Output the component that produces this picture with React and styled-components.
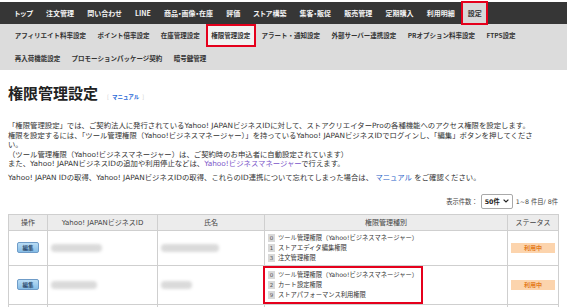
import React from "react";
import styled, { createGlobalStyle } from "styled-components";

const GlobalStyle = createGlobalStyle`
  html, body { margin: 0; padding: 0; background: #fff; }
  body {
    font-family: "DejaVu Sans", "Noto Sans CJK JP", sans-serif;
    color: #333;
    width: 567px;
    height: 307px;
    overflow: hidden;
  }
`;

const Page = styled.div`
  padding-top: 2px;
`;

const MainNav = styled.nav`
  display: flex;
  height: 22px;
  background: #363636;
  padding-left: 8px;
`;

const MainItem = styled.a`
  display: flex;
  align-items: center;
  padding: 0 6.6px;
  font-family: "Noto Sans CJK JP", sans-serif;
  font-feature-settings: "palt";
  font-size: 7px;
  font-weight: 700;
  color: ${(p) => (p.$active ? "#333" : "#f4f4f4")};
  background: ${(p) => (p.$active ? "#d8d8d8" : "transparent")};
  box-shadow: ${(p) => (p.$active ? "inset 0 0 0 2px #e5001c" : "none")};
  margin-top: ${(p) => (p.$active ? "-1px" : "0")};
  height: ${(p) => (p.$active ? "24px" : "auto")};
`;

const SubNav = styled.div`
  background: #dcdcdc;
  padding: 0 0 1px 9px;
`;

const SubRow = styled.div`
  display: flex;
  height: 22.5px;
`;

const SubItem = styled.a`
  display: flex;
  align-items: center;
  padding: 0 5.7px;
  font-family: "Noto Sans CJK JP", sans-serif;
  font-size: 6.5px;
  font-weight: 700;
  color: #333;
  background: ${(p) => (p.$active ? "#f2f2f2" : "transparent")};
  box-shadow: ${(p) => (p.$active ? "inset 0 0 0 2px #e5001c" : "none")};
`;

const Content = styled.main`
  padding: 0 9px 0 8px;
`;

const TitleRow = styled.div`
  display: flex;
  align-items: baseline;
  gap: 6px;
  margin-top: 14px;
`;

const Title = styled.h1`
  margin: 0;
  font-family: "Noto Sans CJK JP", sans-serif;
  font-size: 15px;
  font-weight: 700;
  line-height: 18px;
  color: #222;
`;

const ManualTag = styled.span`
  font-family: "Noto Sans CJK JP", sans-serif;
  font-size: 5.5px;
  font-weight: 700;
  color: #2a6ad8;
  b {
    color: #c8c8c8;
    font-weight: 400;
    margin: 0 3px;
  }
`;

const Intro = styled.p`
  max-width: 528px;
  margin: 19px 0 0;
  font-size: 7.36px;
  line-height: 9.6px;
`;

const Note = styled.p`
  margin: 4px 0 0;
  font-size: 7.36px;
  line-height: 9.6px;
`;

const Link = styled.a`
  color: ${(p) => (p.$visited ? "#7b55c9" : "#2a5fc8")};
`;

const Pager = styled.div`
  display: flex;
  justify-content: flex-end;
  align-items: center;
  gap: 3px;
  margin-top: 11px;
  font-size: 6.3px;
  color: #444;
`;

const SelectBox = styled.div`
  display: flex;
  flex-shrink: 0;
  align-items: center;
  justify-content: space-between;
  width: 32px;
  height: 15px;
  box-sizing: border-box;
  padding: 0 3px 0 3px;
  border: 1px solid #a9a9a9;
  border-radius: 2px;
  background: #fff;
  font-weight: 700;
  font-size: 6.3px;
  color: #222;
`;

const Table = styled.table`
  width: 550px;
  margin-top: 5px;
  border-collapse: collapse;
  table-layout: fixed;
  font-size: 7px;

  th, td {
    border: 1px solid #cfcfcf;
  }
  th {
    height: 15px;
    padding: 0;
    background: #ececec;
    font-weight: 400;
    color: #444;
    text-align: center;
  }
  td {
    height: 34px;
    padding: 0;
    vertical-align: middle;
  }
`;

const EditButton = styled.button`
  display: block;
  margin: 0 auto;
  width: 22px;
  height: 11px;
  padding: 0;
  border: 1px solid #6f9cc8;
  border-radius: 2px;
  background: linear-gradient(#b9dcf5, #86bde6);
  font-family: "Noto Sans CJK JP", sans-serif;
  font-size: 5.5px;
  font-weight: 700;
  color: #2c4a6e;
`;

const Blurred = styled.div`
  width: ${(p) => p.$w}px;
  height: 8px;
  margin-left: 3px;
  background: #dadada;
  border-radius: 4px;
  filter: blur(1.8px);
`;

const PermList = styled.div`
  display: inline-flex;
  flex-direction: column;
  padding: 2px 3px 2px 3px;
  margin-left: ${(p) => (p.$marked ? "-2px" : "0")};
  border: ${(p) => (p.$marked ? "2px solid #e5001c" : "0")};
`;

const PermLine = styled.div`
  display: flex;
  align-items: center;
  gap: 3px;
  height: 10px;
  font-size: 6.3px;
  color: #333;
  white-space: nowrap;
`;

const PermCode = styled.span`
  display: inline-flex;
  align-items: center;
  justify-content: center;
  width: 7px;
  height: 8px;
  background: #d9d9d9;
  color: #555;
  font-size: 5.5px;
`;

const StatusBadge = styled.span`
  display: flex;
  align-items: center;
  justify-content: center;
  width: 44px;
  height: 10px;
  margin: 0 auto;
  background: #fcd4ad;
  color: #e47b1c;
  font-family: "Noto Sans CJK JP", sans-serif;
  font-size: 6px;
  font-weight: 700;
`;

const mainItems = ["トップ", "注文管理", "問い合わせ", "LINE", "商品・画像・在庫", "評価", "ストア構築", "集客・販促", "販売管理", "定期購入", "利用明細", "設定"];
const subRows = [
  ["アフィリエイト料率設定", "ポイント倍率設定", "在庫管理設定", "権限管理設定", "アラート・通知設定", "外部サーバー連携設定", "PRオプション料率設定", "FTPS設定"],
  ["再入荷機能設定", "プロモーションパッケージ契約", "暗号鍵管理"],
];

const rows = [
  { id: 51, name: 58, perms: [["0", "ツール管理権限（Yahoo!ビジネスマネージャー）"], ["1", "ストアエディタ編集権限"], ["3", "注文管理権限"]] },
  { id: 46, name: 31, marked: true, perms: [["0", "ツール管理権限（Yahoo!ビジネスマネージャー）"], ["2", "カート設定権限"], ["9", "ストアパフォーマンス利用権限"]] },
  { id: 50, name: 44, perms: [["0", "ツール管理権限（Yahoo!ビジネスマネージャー）"], ["1", "ストアエディタ編集権限"], ["3", "注文管理権限"]] },
];

function App() {
  return (
    <Page>
      <GlobalStyle />
      <MainNav>
        {mainItems.map((item) => (
          <MainItem key={item} $active={item === "設定"}>{item}</MainItem>
        ))}
      </MainNav>
      <SubNav>
        {subRows.map((row, i) => (
          <SubRow key={i}>
            {row.map((item) => (
              <SubItem key={item} $active={item === "権限管理設定"}>{item}</SubItem>
            ))}
          </SubRow>
        ))}
      </SubNav>
      <Content>
        <TitleRow>
          <Title>権限管理設定</Title>
          <ManualTag><b>[</b>マニュアル<b>]</b></ManualTag>
        </TitleRow>
        <Intro>
          「権限管理設定」では、ご契約法人に発行されているYahoo! JAPANビジネスIDに対して、ストアクリエイターProの各種機能へのアクセス権限を設定します。<br />
          権限を設定するには、「ツール管理権限（Yahoo!ビジネスマネージャー）」を持っているYahoo! JAPANビジネスIDでログインし、「編集」ボタンを押してください。<br />
          （ツール管理権限（Yahoo!ビジネスマネージャー）は、ご契約時のお申込者に自動設定されています）<br />
          また、Yahoo! JAPANビジネスIDの追加や利用停止などは、<Link $visited>Yahoo!ビジネスマネージャー</Link>で行えます。
        </Intro>
        <Note>
          Yahoo! JAPAN IDの取得、Yahoo! JAPANビジネスIDの取得、これらのID連携について忘れてしまった場合は、 <Link>マニュアル</Link> をご確認ください。
        </Note>
        <Pager>
          <span>表示件数：</span>
          <SelectBox>
            <span>50件</span>
            <svg width="6" height="4" viewBox="0 0 6 4">
              <path d="M0.6 0.6 L3 3 L5.4 0.6" fill="none" stroke="#222" strokeWidth="1.2" />
            </svg>
          </SelectBox>
          <span>1~8 件目/ 8件</span>
        </Pager>
        <Table>
          <colgroup>
            <col style={{ width: 39 }} />
            <col style={{ width: 110 }} />
            <col style={{ width: 107 }} />
            <col style={{ width: 243 }} />
            <col style={{ width: 51 }} />
          </colgroup>
          <thead>
            <tr>
              <th>操作</th>
              <th>Yahoo! JAPANビジネスID</th>
              <th>氏名</th>
              <th>権限管理種別</th>
              <th>ステータス</th>
            </tr>
          </thead>
          <tbody>
            {rows.map((row, i) => (
              <tr key={i}>
                <td><EditButton>編集</EditButton></td>
                <td><Blurred $w={row.id} /></td>
                <td><Blurred $w={row.name} /></td>
                <td>
                  <PermList $marked={row.marked}>
                    {row.perms.map(([code, label]) => (
                      <PermLine key={code}>
                        <PermCode>{code}</PermCode>
                        {label}
                      </PermLine>
                    ))}
                  </PermList>
                </td>
                <td><StatusBadge>利用中</StatusBadge></td>
              </tr>
            ))}
          </tbody>
        </Table>
      </Content>
    </Page>
  );
}

export default App;
